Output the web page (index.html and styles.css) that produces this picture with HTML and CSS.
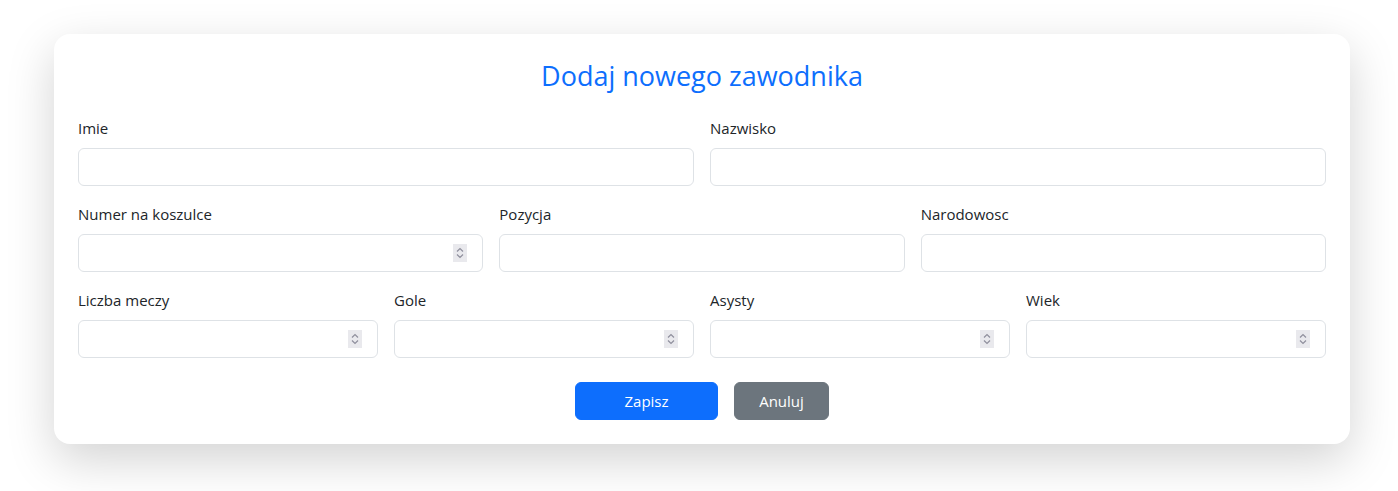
FILE: index.html
```html
<!DOCTYPE html>
<html lang="pl">
<head>
<meta charset="utf-8">
<title>Dodaj nowego zawodnika</title>
<link rel="stylesheet" href="styles.css">
</head>
<body>
<div class="card">
  <h3 class="title">Dodaj nowego zawodnika</h3>
  <form class="form">
    <div class="row cols-2">
      <div class="field"><label>Imie</label><div class="control"><input type="text"></div></div>
      <div class="field"><label>Nazwisko</label><div class="control"><input type="text"></div></div>
    </div>
    <div class="row cols-3">
      <div class="field"><label>Numer na koszulce</label><div class="control num"><input type="text"><span class="spin"><svg viewBox="0 0 14 18" width="14" height="18"><path d="M4 7.5 L7 4.5 L10 7.5 M4 10.5 L7 13.5 L10 10.5" fill="none" stroke="#8f8f9d" stroke-width="1.2"/></svg></span></div></div>
      <div class="field"><label>Pozycja</label><div class="control"><input type="text"></div></div>
      <div class="field"><label>Narodowosc</label><div class="control"><input type="text"></div></div>
    </div>
    <div class="row cols-4">
      <div class="field"><label>Liczba meczy</label><div class="control num"><input type="text"><span class="spin"><svg viewBox="0 0 14 18" width="14" height="18"><path d="M4 7.5 L7 4.5 L10 7.5 M4 10.5 L7 13.5 L10 10.5" fill="none" stroke="#8f8f9d" stroke-width="1.2"/></svg></span></div></div>
      <div class="field"><label>Gole</label><div class="control num"><input type="text"><span class="spin"><svg viewBox="0 0 14 18" width="14" height="18"><path d="M4 7.5 L7 4.5 L10 7.5 M4 10.5 L7 13.5 L10 10.5" fill="none" stroke="#8f8f9d" stroke-width="1.2"/></svg></span></div></div>
      <div class="field"><label>Asysty</label><div class="control num"><input type="text"><span class="spin"><svg viewBox="0 0 14 18" width="14" height="18"><path d="M4 7.5 L7 4.5 L10 7.5 M4 10.5 L7 13.5 L10 10.5" fill="none" stroke="#8f8f9d" stroke-width="1.2"/></svg></span></div></div>
      <div class="field"><label>Wiek</label><div class="control num"><input type="text"><span class="spin"><svg viewBox="0 0 14 18" width="14" height="18"><path d="M4 7.5 L7 4.5 L10 7.5 M4 10.5 L7 13.5 L10 10.5" fill="none" stroke="#8f8f9d" stroke-width="1.2"/></svg></span></div></div>
    </div>
    <div class="actions">
      <button type="button" class="btn btn-primary">Zapisz</button>
      <button type="button" class="btn btn-secondary">Anuluj</button>
    </div>
  </form>
</div>
</body>
</html>
```
FILE: styles.css
```css
* { box-sizing: border-box; }
html, body { background: #fff; }
body {
  margin: 0;
  min-height: 491px;
  padding: 34px 48px 47px 54px;
  font-family: "Open Sans", "Noto Sans", sans-serif;
  font-size: 16px;
  color: #212529;
}
.card {
  background: #fff;
  border-radius: 16px;
  box-shadow: 0 16px 48px rgba(0,0,0,0.175);
  padding: 24px;
  height: 410px;
}
.title {
  margin: 0 0 22px;
  text-align: center;
  color: #0d6efd;
  font-weight: 400;
  font-size: 27px;
  line-height: 36px;
}
.form { display: flex; flex-direction: column; gap: 16px; }
.row { display: grid; gap: 16px; }
.cols-2 { grid-template-columns: repeat(2, 1fr); }
.cols-3 { grid-template-columns: repeat(3, 1fr); }
.cols-4 { grid-template-columns: repeat(4, 1fr); }
.field label {
  display: block;
  font-size: 15px;
  line-height: 24px;
  margin-bottom: 8px;
}
.control { position: relative; }
.control input {
  display: block;
  width: 100%;
  height: 38px;
  border: 1px solid #dee2e6;
  border-radius: 6px;
  background: #fff;
  padding: 6px 12px;
  font: inherit;
  outline: none;
}
.spin {
  position: absolute;
  right: 16px;
  top: 10px;
  width: 14px;
  height: 18px;
  background: #e9e9ed;
  display: block;
}
.spin svg { display: block; }
.actions {
  display: flex;
  justify-content: center;
  gap: 16px;
  margin-top: 8px;
}
.btn {
  height: 38px;
  border: 1px solid transparent;
  border-radius: 6px;
  color: #fff;
  font: inherit;
  font-size: 15px;
  padding: 0;
}
.btn-primary { background: #0d6efd; border-color: #0d6efd; width: 143px; }
.btn-secondary { background: #6c757d; border-color: #6c757d; width: 95px; }
```
